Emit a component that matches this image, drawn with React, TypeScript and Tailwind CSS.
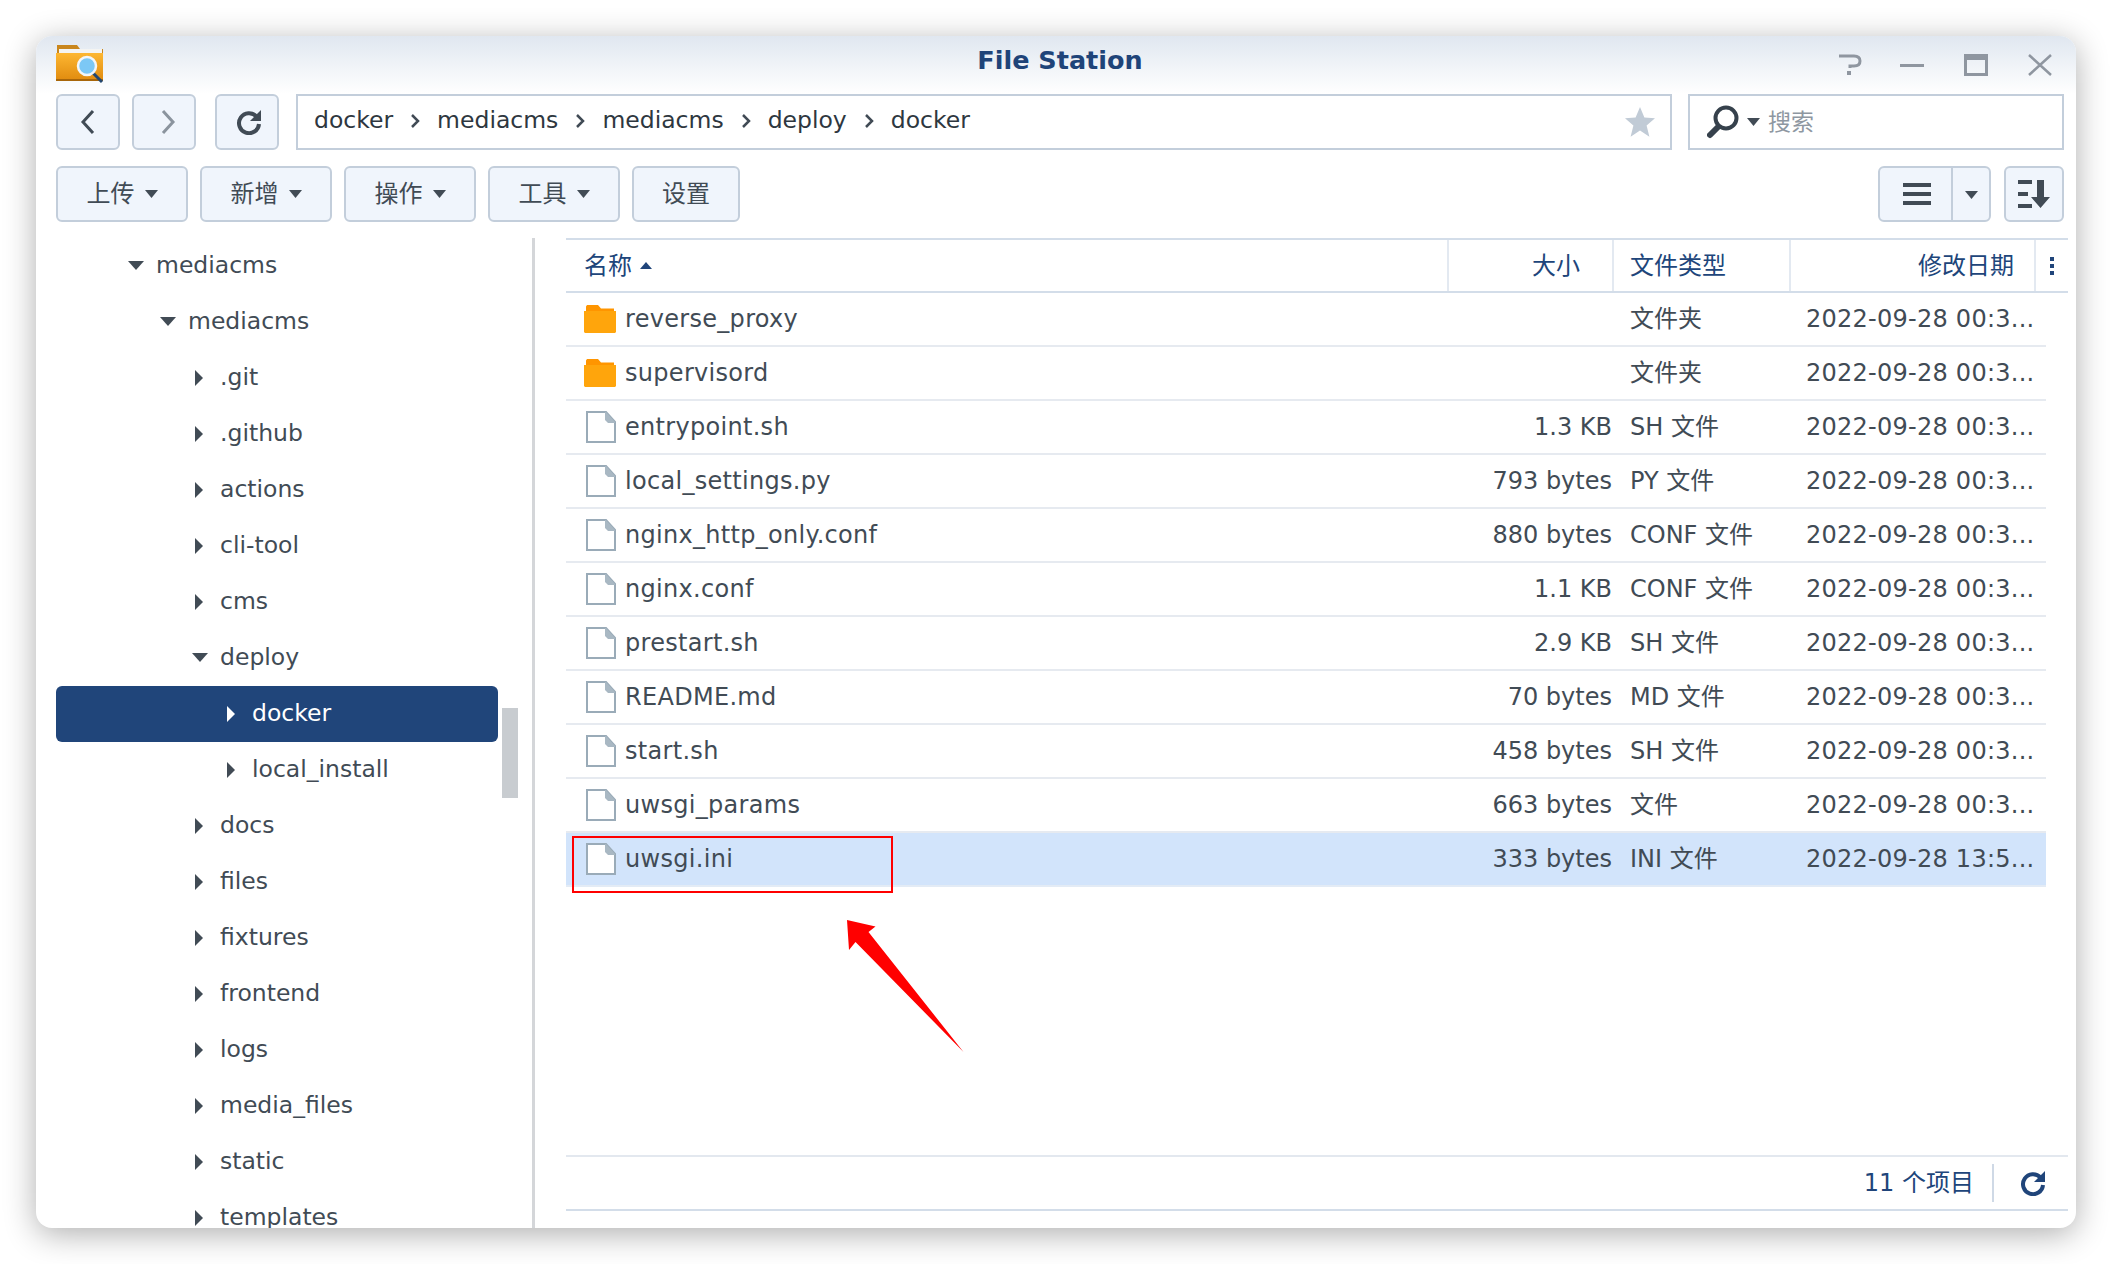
import React from 'react';

const FONT = 'font-["DejaVu_Sans","Noto_Sans_CJK_SC",sans-serif]';

const treeRows = [
  { name: 'mediacms', open: true, pad: 'pl-[72px]' },
  { name: 'mediacms', open: true, pad: 'pl-[104px]' },
  { name: '.git', pad: 'pl-[139px]' },
  { name: '.github', pad: 'pl-[139px]' },
  { name: 'actions', pad: 'pl-[139px]' },
  { name: 'cli-tool', pad: 'pl-[139px]' },
  { name: 'cms', pad: 'pl-[139px]' },
  { name: 'deploy', open: true, pad: 'pl-[136px]' },
  { name: 'docker', selected: true, pad: 'pl-[171px]' },
  { name: 'local_install', pad: 'pl-[171px]' },
  { name: 'docs', pad: 'pl-[139px]' },
  { name: 'files', pad: 'pl-[139px]' },
  { name: 'fixtures', pad: 'pl-[139px]' },
  { name: 'frontend', pad: 'pl-[139px]' },
  { name: 'logs', pad: 'pl-[139px]' },
  { name: 'media_files', pad: 'pl-[139px]' },
  { name: 'static', pad: 'pl-[139px]' },
  { name: 'templates', pad: 'pl-[139px]' },
];

const files = [
  { name: 'reverse_proxy', size: '', type: '文件夹', date: '2022-09-28 00:3...', folder: true },
  { name: 'supervisord', size: '', type: '文件夹', date: '2022-09-28 00:3...', folder: true },
  { name: 'entrypoint.sh', size: '1.3 KB', type: 'SH 文件', date: '2022-09-28 00:3...' },
  { name: 'local_settings.py', size: '793 bytes', type: 'PY 文件', date: '2022-09-28 00:3...' },
  { name: 'nginx_http_only.conf', size: '880 bytes', type: 'CONF 文件', date: '2022-09-28 00:3...' },
  { name: 'nginx.conf', size: '1.1 KB', type: 'CONF 文件', date: '2022-09-28 00:3...' },
  { name: 'prestart.sh', size: '2.9 KB', type: 'SH 文件', date: '2022-09-28 00:3...' },
  { name: 'README.md', size: '70 bytes', type: 'MD 文件', date: '2022-09-28 00:3...' },
  { name: 'start.sh', size: '458 bytes', type: 'SH 文件', date: '2022-09-28 00:3...' },
  { name: 'uwsgi_params', size: '663 bytes', type: '文件', date: '2022-09-28 00:3...' },
  { name: 'uwsgi.ini', size: '333 bytes', type: 'INI 文件', date: '2022-09-28 13:5...', selected: true },
];

const AppIcon = () => (
  <svg width="50" height="40" viewBox="0 0 50 40" className="shrink-0">
    <defs>
      <linearGradient id="fold" x1="0" y1="0" x2="0" y2="1">
        <stop offset="0" stopColor="#fdb732" />
        <stop offset="1" stopColor="#e08a0e" />
      </linearGradient>
    </defs>
    <path d="M1 1h20l3 4h23v8H1z" fill="#c9861d" />
    <rect x="3" y="5" width="43" height="6" fill="#f4f4f2" />
    <path d="M0 9h47v28H0z" fill="url(#fold)" />
    <rect x="0" y="35" width="47" height="2" fill="#a8660a" />
    <path d="M36 28l10 10" stroke="#24476f" strokeWidth="3" />
    <circle cx="31" cy="22" r="9" fill="#7cc8f5" stroke="#f3f6f8" strokeWidth="2.5" />
  </svg>
);

const Caret = ({ dir, className }: { dir: 'down' | 'right' | 'up'; className: string }) => {
  if (dir === 'down') {
    return (
      <svg width="16" height="10" viewBox="0 0 16 10" className={className}>
        <path d="M0 0h16L8 9z" fill="currentColor" />
      </svg>
    );
  }
  if (dir === 'up') {
    return (
      <svg width="12" height="7" viewBox="0 0 12 7" className={className}>
        <path d="M0 7h12L6 0z" fill="currentColor" />
      </svg>
    );
  }
  return (
    <svg width="9" height="16" viewBox="0 0 9 16" className={className}>
      <path d="M0 0v16l8-8z" fill="currentColor" />
    </svg>
  );
};

const MenuCaret = () => (
  <svg width="13" height="8" viewBox="0 0 13 8" className="shrink-0 text-[#414b55]">
    <path d="M0 0h13L6.500 8z" fill="currentColor" />
  </svg>
);

const ReloadIcon = ({ color }: { color: string }) => (
  <svg width="26" height="26" viewBox="0 0 26 26">
    <path d="M20.5 7.5A10 10 0 1 0 23 15" fill="none" stroke={color} strokeWidth="4" />
    <path d="M25 1v11H14z" fill={color} />
  </svg>
);

const FolderIcon = () => (
  <svg width="32" height="28" viewBox="0 0 32 28" className="shrink-0">
    <path d="M2 5V1.500L3 0h11l3 3.500h13V6H2z" fill="#ff9500" />
    <path d="M0 6h32v21l-1 1H1l-1-1z" fill="#ffa50c" />
  </svg>
);

const FileIcon = () => (
  <svg width="30" height="32" viewBox="0 0 30 32" className="shrink-0">
    <path d="M1 1h19l9 10v20H1z" fill="#fff" stroke="#9aabb8" strokeWidth="2" />
    <path d="M19 1h1l9 10v1h-7l-3-3z" fill="#a9b8c3" />
  </svg>
);

const ToolButton = ({ label, menu = true, width }: { label: string; menu?: boolean; width: string }) => (
  <button className={`${width} h-[56px] rounded-[6px] border-2 border-[#c3cedb] bg-[#f0f5fc] flex items-center justify-center gap-[10px] text-[24px] text-[#414b55]`}>
    <span>{label}</span>
    {menu && <MenuCaret />}
  </button>
);

const NavButton = ({ children }: { children: React.ReactNode }) => (
  <button className="w-[64px] h-[56px] rounded-[6px] border-2 border-[#c3cedb] bg-[#f0f5fc] flex items-center justify-center">
    {children}
  </button>
);

const Crumb = () => (
  <svg width="10" height="16" viewBox="0 0 10 16" className="shrink-0">
    <path d="M2 2l6 6-6 6" fill="none" stroke="#414b55" strokeWidth="2.500" />
  </svg>
);

export default function App() {
  const crumbs = ['docker', 'mediacms', 'mediacms', 'deploy', 'docker'];
  return (
    <div className={`${FONT} w-[2112px] h-[1264px] bg-white pt-[36px] pl-[36px] overflow-hidden`}>
      <div className="relative w-[2040px] h-[1192px] rounded-[16px] bg-white shadow-[0_6px_32px_rgba(0,0,0,0.32)] overflow-hidden flex flex-col">
        {/* title bar */}
        <div className="h-[58px] shrink-0 bg-gradient-to-b from-[#e0e7f0] to-white flex items-center justify-between pl-[20px] pr-[24px] relative">
          <div className="-mt-[2px]">
            <AppIcon />
          </div>
          <div className="absolute left-[8px] right-0 top-[8px] text-center text-[25.500px] leading-[32px] font-bold text-[#1f4479]">File Station</div>
          <div className="flex items-center relative">
            <svg width="24" height="22" viewBox="0 0 24 22" className="mr-[38px]">
              <path d="M1 2h15q6 0 6 5t-6 5h-4v2" fill="none" stroke="#8f96a0" strokeWidth="3" />
              <rect x="9" y="17" width="4" height="4" fill="#8f96a0" />
            </svg>
            <div className="w-[24px] h-[3px] bg-[#8f96a0] mr-[40px]" />
            <div className="w-[24px] h-[22px] border-[3px] border-t-[6px] border-[#8f96a0] mr-[40px]" />
            <svg width="24" height="22" viewBox="0 0 24 22">
              <path d="M1 1l22 20M23 1L1 21" stroke="#8f96a0" strokeWidth="2.500" />
            </svg>
          </div>
        </div>

        {/* nav row */}
        <div className="h-[56px] shrink-0 flex items-center pl-[20px] pr-[12px]">
          <NavButton>
            <svg width="16" height="26" viewBox="0 0 16 26">
              <path d="M13 2L3 13l10 11" fill="none" stroke="#414b55" strokeWidth="3" />
            </svg>
          </NavButton>
          <div className="w-[12px]" />
          <NavButton>
            <svg width="16" height="26" viewBox="0 0 16 26" className="ml-[8px]">
              <path d="M3 2l10 11L3 24" fill="none" stroke="#8b949e" strokeWidth="3" />
            </svg>
          </NavButton>
          <div className="w-[19px]" />
          <NavButton>
            <div className="ml-[4px] flex items-center">
              <ReloadIcon color="#414b55" />
            </div>
          </NavButton>
          <div className="w-[17px]" />
          <div className="w-[1376px] h-[56px] border-2 border-[#c3cedb] bg-white flex items-center pl-[16px] pr-[14px] pb-[2px] gap-[17px] text-[23.500px] text-[#2e3740]">
            {crumbs.map((c, i) => (
              <React.Fragment key={i}>
                {i > 0 && <Crumb />}
                <span>{c}</span>
              </React.Fragment>
            ))}
            <svg width="32" height="32" viewBox="0 0 32 32" className="ml-auto mt-[2px]">
              <path d="M16 1l4.400 10.600L31 12.300l-8.400 7.200 2.800 11.200L16 24.600l-9.400 6.100 2.800-11.200L1 12.300l10.600-.7z" fill="#c1cbd6" />
            </svg>
          </div>
          <div className="w-[16px]" />
          <div className="w-[376px] h-[56px] border-2 border-[#c3cedb] bg-white flex items-center pl-[17px] gap-[8px]">
            <svg width="32" height="34" viewBox="0 0 32 34" className="shrink-0">
              <circle cx="19" cy="13" r="10.500" fill="none" stroke="#36414c" strokeWidth="4" />
              <path d="M11 22L3 30" stroke="#36414c" strokeWidth="6" strokeLinecap="round" />
            </svg>
            <MenuCaret />
            <span className="text-[23px] text-[#8e97a1]">搜索</span>
          </div>
        </div>

        {/* action row */}
        <div className="h-[56px] mt-[16px] shrink-0 flex items-center pl-[20px] pr-[12px] gap-[12px]">
          <ToolButton label="上传" width="w-[132px]" />
          <ToolButton label="新增" width="w-[132px]" />
          <ToolButton label="操作" width="w-[132px]" />
          <ToolButton label="工具" width="w-[132px]" />
          <ToolButton label="设置" menu={false} width="w-[108px]" />
          <div className="ml-auto flex items-center gap-[13px]">
            <div className="w-[113px] h-[56px] rounded-[6px] border-2 border-[#c3cedb] bg-[#f0f5fc] flex items-center">
              <div className="w-[73px] h-full border-r-2 border-[#c3cedb] flex flex-col items-center justify-center gap-[5px] pl-[3px]">
                <div className="w-[28px] h-[4px] bg-[#414b55]" />
                <div className="w-[28px] h-[4px] bg-[#414b55]" />
                <div className="w-[28px] h-[4px] bg-[#414b55]" />
              </div>
              <div className="flex-1 flex items-center justify-center pt-[2px]">
                <MenuCaret />
              </div>
            </div>
            <div className="w-[60px] h-[56px] rounded-[6px] border-2 border-[#c3cedb] bg-[#f0f5fc] flex items-center justify-center">
              <svg width="32" height="28" viewBox="0 0 32 28">
                <path d="M0 0h14v4H0zM0 12h10v4H0zM0 24h14v4H0z" fill="#414b55" />
                <path d="M19 0h7v17h6L22.500 28 13 17h6z" fill="#414b55" />
              </svg>
            </div>
          </div>
        </div>

        {/* body */}
        <div className="flex-1 min-h-0 mt-[16px] flex">
          {/* tree */}
          <div className="relative w-[499px] shrink-0 border-r-[3px] border-[#d4d6d9] overflow-hidden">
            {treeRows.map((r, i) => (
              <div
                key={i}
                className={`h-[56px] ml-[20px] w-[442px] rounded-[6px] flex items-center ${r.selected ? 'bg-[#20457a] text-white' : 'text-[#414b55]'}`}
              >
                <div className={`${r.pad} flex items-center ${r.open ? 'gap-[12px]' : 'gap-[16px]'} text-[23.500px]`}>
                  {r.open ? (
                    <Caret dir="down" className="shrink-0 text-[#414b55]" />
                  ) : (
                    <Caret dir="right" className={`shrink-0 ${r.selected ? 'text-white' : 'text-[#414b55]'}`} />
                  )}
                  <span>{r.name}</span>
                </div>
              </div>
            ))}
            <div className="absolute left-[466px] top-[470px] w-[16px] h-[90px] bg-[#c8ccd0]" />
          </div>

          {/* file list */}
          <div className="flex-1 min-w-0 pl-[31px] pr-[8px] flex flex-col">
            <div className="h-[55px] shrink-0 border-y-2 border-[#d3dde9] flex items-stretch text-[24px] text-[#20457a]">
              <div className="w-[883px] border-r-2 border-[#e3e9f1] pl-[18px] flex items-center gap-[8px]">
                <span>名称</span>
                <Caret dir="up" className="shrink-0 text-[#20457a]" />
              </div>
              <div className="w-[165px] border-r-2 border-[#e3e9f1] pr-[32px] flex items-center justify-end">大小</div>
              <div className="w-[177px] border-r-2 border-[#e3e9f1] pl-[16px] flex items-center">文件类型</div>
              <div className="w-[245px] border-r-2 border-[#e3e9f1] pr-[20px] flex items-center justify-end">修改日期</div>
              <div className="flex-1 flex flex-col items-center justify-center gap-[3px]">
                <div className="w-[4px] h-[4px] bg-[#20457a]" />
                <div className="w-[4px] h-[4px] bg-[#20457a]" />
                <div className="w-[4px] h-[4px] bg-[#20457a]" />
              </div>
            </div>
            <div className="w-[1480px] flex-1 min-h-0">
              {files.map((f) => (
                <div
                  key={f.name}
                  className={`h-[54px] border-b-2 flex items-center text-[24px] text-[#414b55] ${f.selected ? 'bg-[#d2e4fb] border-[#e3ebf5]' : 'border-[#e6eaf0]'}`}
                >
                  <div className={`w-[882px] flex items-center ${f.folder ? 'pl-[18px] gap-[9px]' : 'pl-[20px] gap-[9px]'}`}>
                    {f.folder ? <FolderIcon /> : <FileIcon />}
                    <span className="tracking-[0.3px]">{f.name}</span>
                  </div>
                  <div className="w-[164px] text-right whitespace-nowrap">{f.size}</div>
                  <div className="w-[177px] pl-[18px] whitespace-nowrap">{f.type}</div>
                  <div className="flex-1 pl-[17px] whitespace-nowrap tracking-[0.25px]">{f.date}</div>
                </div>
              ))}
            </div>
            <div className="h-[56px] shrink-0 border-y-2 border-t-[#e3e8ef] border-b-[#d3dde9] flex items-center justify-end">
              <span className="text-[24px] text-[#20457a]">11 个项目</span>
              <div className="w-[2px] h-[38px] bg-[#cfd9e6] ml-[18px] mr-[26px]" />
              <div className="mr-[22px] flex items-center">
                <ReloadIcon color="#20457a" />
              </div>
            </div>
            <div className="h-[17px] shrink-0" />
          </div>
        </div>

        {/* red annotation over the picture */}
        <div className="absolute left-[536px] top-[800px] w-[321px] h-[57px] border-2 border-[#ff0000]" />
        <svg width="130" height="140" viewBox="0 0 130 140" className="absolute left-[800px] top-[880px]">
          <path d="M11 4l28.500 6.500-7 5.500 95 120-108-110-6.500 8z" fill="#ff0000" />
        </svg>
      </div>
    </div>
  );
}
